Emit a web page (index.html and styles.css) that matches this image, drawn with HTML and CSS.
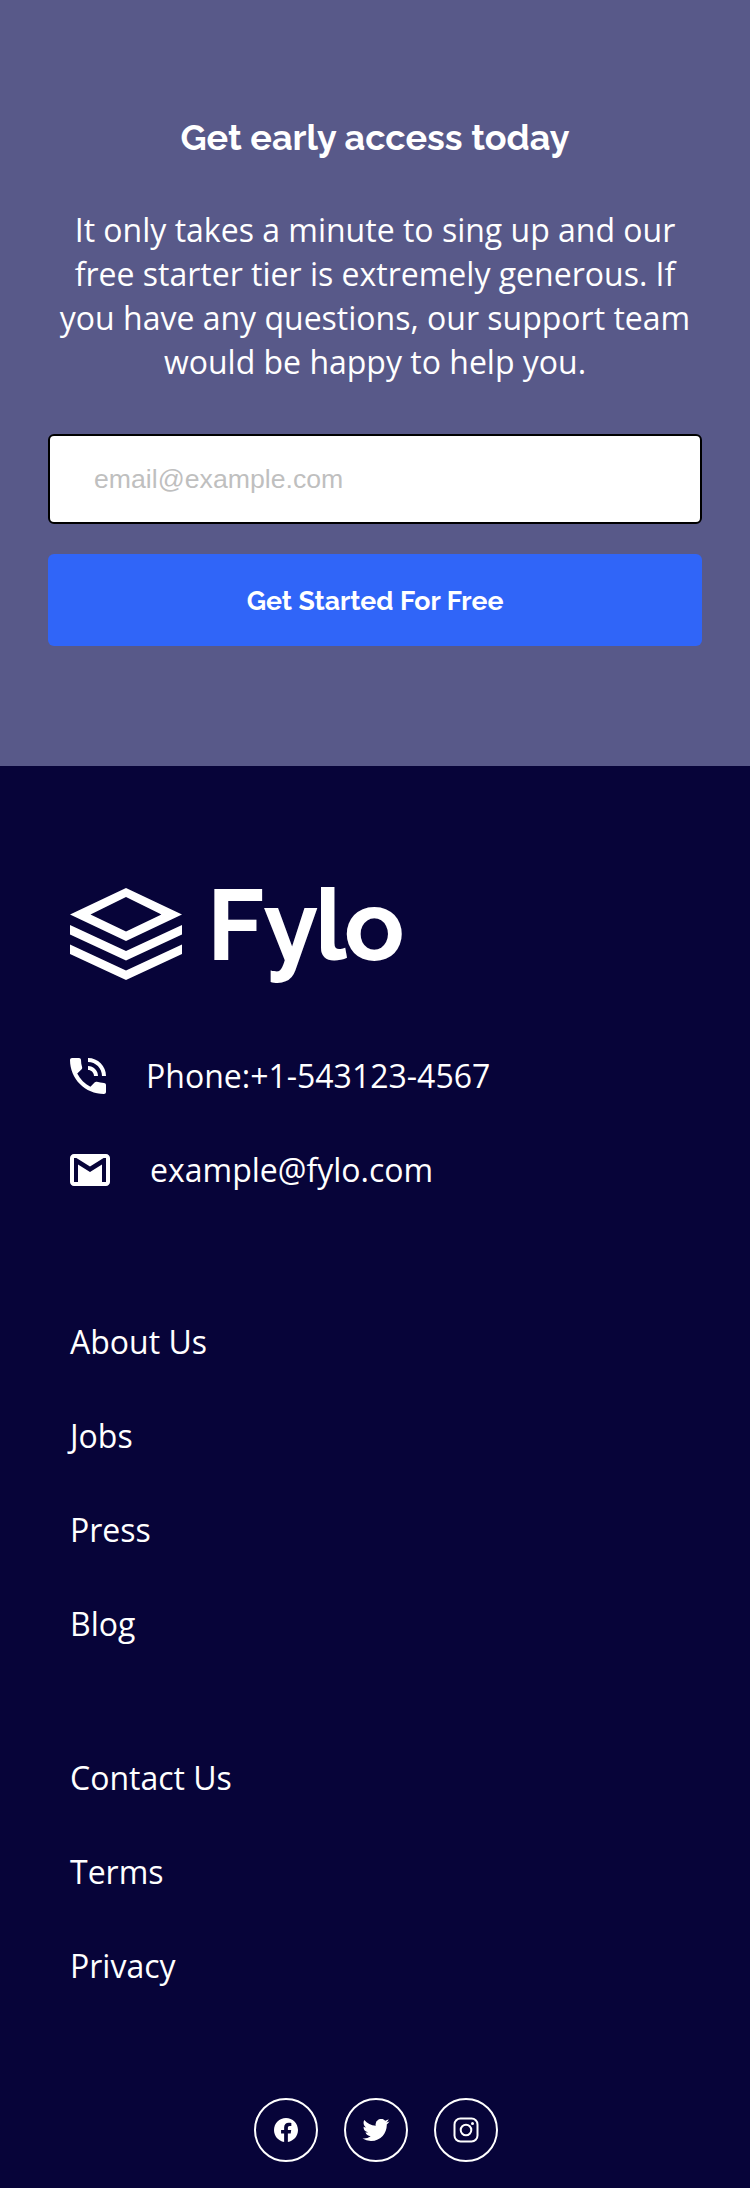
FILE: index.html
```html
<!DOCTYPE html>
<html lang="en">
<head>
<meta charset="utf-8">
<title>Fylo</title>
<link rel="stylesheet" href="styles.css">
</head>
<body>
<section class="signup">
  <h2 class="signup-title">Get early access today</h2>
  <p class="signup-text">It only takes a minute to sing up and our free starter tier is extremely generous. If you have any questions, our support team would be happy to help you.</p>
  <form class="signup-form">
    <input class="signup-input" type="email" placeholder="email@example.com">
    <button class="signup-button" type="button">Get Started For Free</button>
  </form>
</section>
<footer class="footer">
  <svg class="logo" width="340" height="104" viewBox="0 0 340 104" fill="#fff">
    <path fill-rule="evenodd" d="M56 2L112 28.500L56 55L0 28.500ZM56 11L20.500 28.500L56 45.500L91.500 28.500Z"/>
    <path d="M0 39L56 65L112 39V48.500L56 74.500L0 48.500Z"/>
    <path d="M0 58.500L56 84.500L112 58.500V68L56 94L0 68Z"/>
    <text class="logo-text" x="137 193.500 245 274" y="74">Fylo</text>
  </svg>
  <ul class="contacts">
    <li class="contact">
      <svg width="36" height="36" viewBox="3 3 18 18" fill="#fff"><path d="M20 15.500c-1.250 0-2.450-.2-3.570-.57-.1-.03-.21-.05-.31-.05-.26 0-.51.1-.71.29l-2.200 2.200c-2.830-1.440-5.150-3.750-6.590-6.590l2.200-2.200c.28-.26.36-.65.25-1C8.700 6.450 8.500 5.250 8.500 4c0-.55-.45-1-1-1H4c-.55 0-1 .45-1 1 0 9.390 7.610 17 17 17 .55 0 1-.45 1-1v-3.500c0-.55-.45-1-1-1zM19 12h2c0-4.970-4.030-9-9-9v2c3.870 0 7 3.130 7 7zm-4 0h2c0-2.760-2.240-5-5-5v2c1.660 0 3 1.340 3 3z"/></svg>
      <span>Phone:+1-543123-4567</span>
    </li>
    <li class="contact">
      <svg width="40" height="32" viewBox="2 4 20 16" fill="#fff"><path d="M20 4H4c-1.100 0-2 .9-2 2v12c0 1.100.9 2 2 2h16c1.100 0 2-.9 2-2V6c0-1.100-.9-2-2-2zm0 14h-2V9.200l-6 3.800-6-3.800V18H4V6h1.200l6.800 4.250L18.800 6H20v12z"/></svg>
      <span>example@fylo.com</span>
    </li>
  </ul>
  <ul class="links">
    <li>About Us</li><li>Jobs</li><li>Press</li><li>Blog</li>
  </ul>
  <ul class="links links-second">
    <li>Contact Us</li><li>Terms</li><li>Privacy</li>
  </ul>
  <div class="social">
    <a class="social-link"><svg width="24" height="24" viewBox="0 0 24 24" fill="#fff"><path d="M24 12.070C24 5.400 18.630 0 12 0S0 5.400 0 12.070C0 18.100 4.390 23.090 10.130 24v-8.440H7.080v-3.490h3.050V9.410c0-3.020 1.790-4.690 4.530-4.690 1.310 0 2.680.24 2.680.24v2.970h-1.510c-1.490 0-1.960.93-1.960 1.890v2.250h3.330l-.53 3.490h-2.800V24C19.610 23.090 24 18.100 24 12.070z"/></svg></a>
    <a class="social-link"><svg width="28" height="22" viewBox="0 2.300 24 19.500" fill="#fff"><path d="M23.950 4.570a10 10 0 0 1-2.820.77 4.960 4.960 0 0 0 2.160-2.720c-.95.550-2 .950-3.130 1.180a4.920 4.920 0 0 0-8.380 4.480C7.690 8.100 4.070 6.130 1.640 3.160a4.820 4.820 0 0 0-.67 2.480c0 1.710.87 3.210 2.190 4.100a4.900 4.900 0 0 1-2.230-.620v.060a4.920 4.920 0 0 0 3.950 4.830 5 5 0 0 1-2.210.080 4.940 4.940 0 0 0 4.600 3.420A9.870 9.870 0 0 1 0 19.540a13.990 13.990 0 0 0 7.550 2.210c9.050 0 14-7.500 14-13.980 0-.210 0-.420-.020-.630a9.940 9.940 0 0 0 2.460-2.550z"/></svg></a>
    <a class="social-link"><svg width="26" height="26" viewBox="0 0 26 26" fill="none" stroke="#fff" stroke-width="2"><rect x="1.500" y="1.500" width="23" height="23" rx="6"/><circle cx="13" cy="13" r="5.300"/><circle cx="19.500" cy="6.600" r="1.500" fill="#fff" stroke="none"/></svg></a>
  </div>
</footer>
</body>
</html>
```
FILE: styles.css
```css
* { box-sizing: border-box; }
body { margin: 0; font: 32px/44px "Open Sans", sans-serif; color: #fff; background: hsl(243, 87%, 12%); }
ul { list-style: none; margin: 0; padding: 0; }
svg { display: block; flex: none; }
.signup { height: 766px; padding: 116px 48px 0; background: hsl(238, 22%, 44%); text-align: center; }
.signup-title { margin: 0; font: 700 36px/42px Raleway, Lato, sans-serif; }
.signup-text { margin: 50px 0; }
.signup-form { display: flex; flex-direction: column; gap: 30px; }
.signup-input { height: 90px; padding: 0 44px; border: 2px solid #000; border-radius: 6px; background: #fff; font: 26.667px "Liberation Sans", sans-serif; }
.signup-input::placeholder { color: #bfbfbf; opacity: 1; }
.signup-button { height: 92px; padding: 1px 0 0; border: 0; border-radius: 6px; background: hsl(224, 93%, 58%); color: #fff; font: 700 26.667px Raleway, Lato, sans-serif; }
.footer { padding: 120px 70px 26px; }
.logo { overflow: visible; }
.logo-text { font: 700 100px Raleway, Lato, sans-serif; }
.contacts { display: flex; flex-direction: column; gap: 50px; margin-top: 64px; }
.contact { display: flex; height: 44px; align-items: center; gap: 40px; }
.links { display: flex; flex-direction: column; gap: 50px; margin-top: 128px; }
.links-second { margin-top: 110px; }
.social { display: flex; justify-content: center; gap: 26px; margin: 110px 0 0 2px; }
.social-link { display: flex; width: 64px; height: 64px; align-items: center; justify-content: center; border: 2px solid #fff; border-radius: 50%; }
```
